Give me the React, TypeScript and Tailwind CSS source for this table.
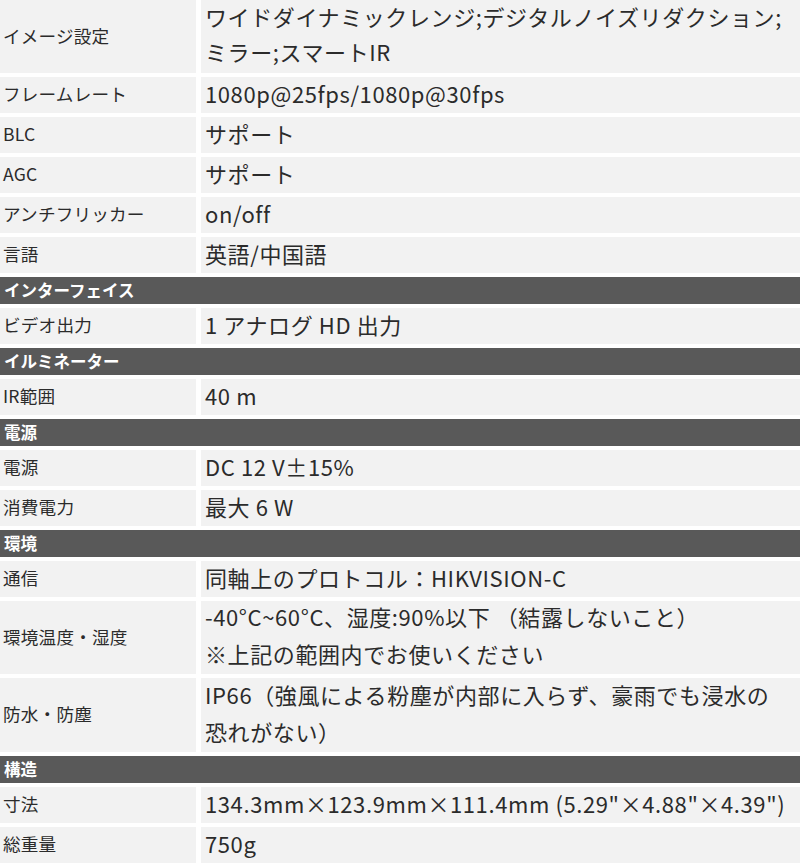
import React from "react";

type Row =
  | { kind: "h"; label: string }
  | { kind: "r"; label: string; lines: string[]; h?: string; lh?: string };

const rows: Row[] = [
  { kind: "r", label: "イメージ設定", lines: ["ワイドダイナミックレンジ;デジタルノイズリダクション;", "ミラー;スマートIR"], h: "h-[73px]", lh: "leading-[35px]" },
  { kind: "r", label: "フレームレート", lines: ["1080p@25fps/1080p@30fps"] },
  { kind: "r", label: "BLC", lines: ["サポート"] },
  { kind: "r", label: "AGC", lines: ["サポート"] },
  { kind: "r", label: "アンチフリッカー", lines: ["on/off"] },
  { kind: "r", label: "言語", lines: ["英語/中国語"] },
  { kind: "h", label: "インターフェイス" },
  { kind: "r", label: "ビデオ出力", lines: ["1 アナログ HD 出力"] },
  { kind: "h", label: "イルミネーター" },
  { kind: "r", label: "IR範囲", lines: ["40 m"] },
  { kind: "h", label: "電源" },
  { kind: "r", label: "電源", lines: ["DC 12 V±15%"] },
  { kind: "r", label: "消費電力", lines: ["最大 6 W"] },
  { kind: "h", label: "環境" },
  { kind: "r", label: "通信", lines: ["同軸上のプロトコル：HIKVISION-C"] },
  { kind: "r", label: "環境温度・湿度", lines: ["-40°C~60°C、湿度:90%以下 （結露しないこと）", "※上記の範囲内でお使いください"], h: "h-[73px]", lh: "leading-[37.5px]" },
  { kind: "r", label: "防水・防塵", lines: ["IP66（強風による粉塵が内部に入らず、豪雨でも浸水の", "恐れがない）"], h: "h-[74px]", lh: "leading-[37px]" },
  { kind: "h", label: "構造" },
  { kind: "r", label: "寸法", lines: ["134.3mm×123.9mm×111.4mm (5.29\"×4.88\"×4.39\")"] },
  { kind: "r", label: "総重量", lines: ["750g"] },
];

export default function App() {
  return (
    <div
      className="w-[800px] h-[867px] bg-white overflow-hidden text-[#2b2b2b]"
      style={{ fontFamily: '"Noto Sans CJK JP", "Noto Sans", sans-serif' }}
    >
      <div className="flex flex-col gap-[4px]">
        {rows.map((r, i) =>
          r.kind === "h" ? (
            <div
              key={i}
              className="h-[27px] bg-[#595959] text-white font-bold text-[16.5px] flex items-center pl-[4px] leading-none"
            >
              {r.label}
            </div>
          ) : (
            <div key={i} className={`flex gap-[5px] ${r.h ?? "h-[36px]"}`}>
              <div className="w-[196px] shrink-0 bg-[#f2f2f2] flex items-center pl-[3px] pb-[1px] text-[17.6px] tracking-[0.2px] whitespace-nowrap">
                {r.label}
              </div>
              <div className="flex-1 bg-[#f2f2f2] flex flex-col justify-center pl-[4px] pb-[5px] text-[22px] tracking-[0.6px]">
                {r.lines.map((l, j) => (
                  <div key={j} className={`${r.lh ?? "leading-[36px]"} whitespace-nowrap`}>
                    {l}
                  </div>
                ))}
              </div>
            </div>
          )
        )}
      </div>
    </div>
  );
}
